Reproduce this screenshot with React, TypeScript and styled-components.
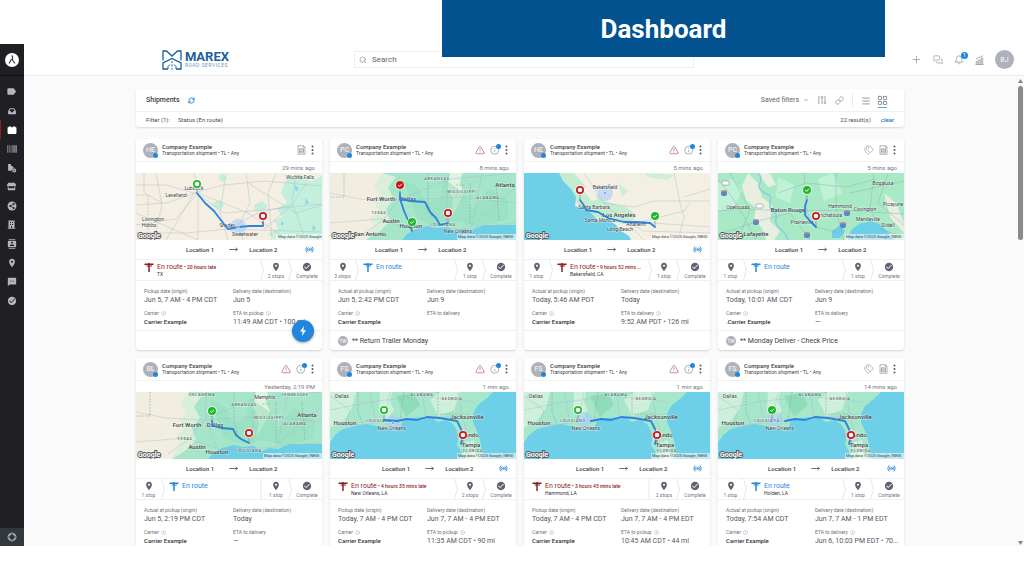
import React from 'react';
import styled, { createGlobalStyle } from 'styled-components';
import { FaBarcode, FaStore } from 'react-icons/fa';
import { MdLabel, MdSms, MdPlace, MdCheckCircle, MdContacts } from 'react-icons/md';
import {
  Plus, MessagesSquare, Bell, Search, RefreshCw, ChevronDown, Menu, LayoutGrid, Link,
  TriangleAlert, Tags, Radio, Info, MoveRight,
} from 'lucide-react';

const GlobalStyle = createGlobalStyle`
  * { box-sizing: border-box; }
  body { margin: 0; background: #fff; overflow: hidden; font-family: Roboto, "Liberation Sans", sans-serif; color: #4a4d55; }
  button { border: 0; padding: 0; margin: 0; background: none; font: inherit; color: inherit; cursor: pointer; }
  svg { display: block; flex: none; }
  a { text-decoration: none; }
`;

/* ---------- shell ---------- */
const Page = styled.div`
  position: relative;
  height: 100vh;
  padding: 44px 0 30px;
`;
const Banner = styled.h1`
  position: absolute;
  top: 0;
  left: 442px;
  right: 139px;
  height: 57px;
  margin: 0;
  display: flex;
  align-items: center;
  justify-content: center;
  background: #01528f;
  color: #fff;
  font-size: 26px;
  line-height: 32px;
  font-weight: 700;
  z-index: 2;
`;
const Shell = styled.div`
  height: 100%;
  display: flex;
`;
const Sidebar = styled.nav`
  width: 24px;
  flex: none;
  display: flex;
  flex-direction: column;
  background: #1f1f24;
  color: #b3b6be;
`;
const Brand = styled.div`
  height: 32px;
  display: flex;
  align-items: center;
  justify-content: center;
  border-bottom: 1px solid #0c0c0f;
  margin-bottom: 6px;
`;
const NavItem = styled.button<{ $active?: boolean }>`
  height: 19px;
  flex: none;
  display: flex;
  align-items: center;
  justify-content: center;
  padding-right: 2px;
  border-left: 1px solid ${p => (p.$active ? '#8f1f1f' : 'transparent')};
  color: ${p => (p.$active ? '#fff' : 'inherit')};
`;
const NavFoot = styled(NavItem)`
  margin-top: auto;
  height: 18px;
  background: #33383c;
`;
const Main = styled.div`
  flex: 1;
  min-width: 0;
  display: flex;
  flex-direction: column;
`;
const Header = styled.header`
  height: 32px;
  flex: none;
  display: grid;
  grid-template-columns: 1fr 340px 1fr;
  align-items: center;
  background: #fff;
  border-bottom: 1px solid #ebebed;
`;
const Logo = styled.div`
  display: flex;
  align-items: center;
  justify-content: flex-end;
  gap: 3px;
  padding-right: 125px;
  color: #1b5f9c;
`;
const LogoText = styled.div`
  display: flex;
  flex-direction: column;
`;
const LogoName = styled.span`
  font-size: 13px;
  line-height: 12px;
  font-weight: 700;
`;
const LogoSub = styled.span`
  font-size: 5px;
  line-height: 5px;
  color: #6f97bd;
  letter-spacing: 0.5px;
`;
const SearchBox = styled.label`
  height: 17px;
  display: flex;
  align-items: center;
  gap: 5px;
  padding: 0 4px;
  border: 1px solid #efeff1;
  color: #85888f;
`;
const SearchInput = styled.input`
  flex: 1;
  min-width: 0;
  border: 0;
  padding: 0;
  outline: 0;
  background: transparent;
  font: 400 8px/12px Roboto, sans-serif;
  color: #62656c;
  &::placeholder { color: #62656c; opacity: 1; }
`;
const HeaderActions = styled.div`
  display: flex;
  align-items: center;
  justify-content: flex-end;
  gap: 11px;
  padding-right: 10px;
  color: #8b8e95;
`;
const IconButton = styled.button`
  position: relative;
  display: flex;
  align-items: center;
  justify-content: center;
`;
const Badge = styled.span`
  position: absolute;
  top: -3px;
  right: -4px;
  width: 7px;
  height: 7px;
  border-radius: 50%;
  background: #1e88e0;
  color: #fff;
  font-size: 5px;
  line-height: 7px;
  text-align: center;
`;
const Avatar = styled.span<{ $size: number }>`
  position: relative;
  flex: none;
  width: ${p => p.$size}px;
  height: ${p => p.$size}px;
  border-radius: 50%;
  background: #adb1b9;
  color: #f1f2f4;
  display: flex;
  align-items: center;
  justify-content: center;
  font-weight: 500;
  font-size: ${p => (p.$size > 10 ? 7 : 5)}px;
  line-height: 8px;
`;
const AvatarDot = styled.i`
  position: absolute;
  right: 0;
  bottom: 0;
  width: 5px;
  height: 5px;
  border-radius: 50%;
  background: #2186dc;
`;
const Body = styled.div`
  flex: 1;
  min-height: 0;
  display: flex;
  background: #fafafa;
`;
const Content = styled.main`
  flex: 1;
  min-width: 0;
  overflow: hidden;
`;
const Column = styled.div`
  width: 100%;
  max-width: 768px;
  margin: 0 auto;
  padding-top: 13px;
`;
const ScrollTrack = styled.div`
  width: 8px;
  flex: none;
  display: flex;
  flex-direction: column;
  align-items: center;
  padding: 3px 0 1px;
  gap: 3px;
  color: #858585;
`;
const ScrollThumb = styled.div`
  width: 5px;
  height: 154px;
  border-radius: 3px;
  background: #8a8a8a;
  margin-bottom: auto;
`;

/* ---------- filter panel ---------- */
const Panel = styled.section`
  background: #fff;
  border-radius: 3px;
  box-shadow: 0 1px 2px rgba(0, 0, 0, 0.14);
  margin-bottom: 12px;
`;
const PanelRow = styled.div<{ $h: number }>`
  height: ${p => p.$h}px;
  display: flex;
  align-items: center;
  padding: 0 10px;
  font-size: 7px;
  line-height: 10px;
  & + & { border-top: 1px solid #f1f1f2; }
`;
const PanelTitle = styled.h2`
  margin: 0 8px 0 0;
  font-size: 7px;
  line-height: 10px;
  font-weight: 500;
  color: #3a3d44;
`;
const Push = styled.span`
  margin-left: auto;
`;
const Tools = styled.div`
  margin-left: auto;
  display: flex;
  align-items: center;
  gap: 8px;
  padding-right: 7px;
  color: #85888f;
`;
const SavedButton = styled.button`
  display: flex;
  align-items: center;
  gap: 4px;
  color: #62656c;
`;
const ToolDivider = styled.i`
  width: 1px;
  height: 16px;
  background: #ececee;
`;
const ViewButton = styled(IconButton)<{ $on?: boolean }>`
  height: 14px;
  width: 9px;
  margin-top: 2px;
  border-bottom: 1px solid ${p => (p.$on ? '#4aa8dc' : 'transparent')};
`;
const FilterText = styled.span`
  margin-right: 8px;
  font-size: 6px;
`;
const ClearLink = styled.a`
  margin-left: 2px;
  font-size: 6px;
  font-weight: 500;
  color: #1479b8;
`;

/* ---------- shipment card ---------- */
const Grid = styled.div`
  display: grid;
  grid-template-columns: repeat(4, 1fr);
  gap: 8px;
`;
const Card = styled.article`
  position: relative;
  min-width: 0;
  background: #fff;
  border-radius: 3px;
  box-shadow: 0 1px 2px rgba(0, 0, 0, 0.16);
  display: flex;
  flex-direction: column;
`;
const CardHead = styled.div`
  height: 23px;
  display: flex;
  align-items: center;
  gap: 4px;
  padding: 0 8px 0 7px;
  border-bottom: 1px solid #f2f2f3;
`;
const HeadText = styled.div`
  flex: 1;
  min-width: 0;
  white-space: nowrap;
`;
const Company = styled.div`
  font-size: 6px;
  line-height: 7px;
  font-weight: 500;
  color: #3a3d44;
`;
const Kind = styled.div`
  font-size: 5px;
  line-height: 7px;
  color: #43464d;
`;
const HeadIcons = styled.div`
  display: flex;
  align-items: center;
  gap: 5px;
  color: #8d9097;
`;
const BlueDot = styled.i`
  position: absolute;
  top: -1px;
  right: -1px;
  width: 5px;
  height: 5px;
  border-radius: 50%;
  background: #2186dc;
`;
const Updated = styled.div`
  height: 11px;
  padding-right: 7px;
  text-align: right;
  font-size: 6px;
  line-height: 11px;
  color: #74777e;
`;
const MapBox = styled.div`
  height: 67px;
  overflow: hidden;
  svg { width: 100%; height: 100%; }
`;
const Places = styled.div<{ $inset: number }>`
  height: 20px;
  display: flex;
  align-items: center;
  padding: 0 8px 0 ${p => p.$inset}px;
  font-size: 6px;
  line-height: 8px;
  font-weight: 500;
  color: #3a3d44;
  border-bottom: 1px solid #f0f0f1;
  svg { margin: 0 11px 0 15px; }
`;
const Live = styled.span`
  margin-left: auto;
  color: #2a8fdf;
  svg { margin: 0; }
`;
const Track = styled.div`
  height: 21px;
  display: flex;
  border-bottom: 1px solid #f0f0f1;
`;
const Stop = styled.div<{ $w: number }>`
  width: ${p => p.$w}px;
  flex: none;
  display: flex;
  flex-direction: column;
  align-items: center;
  padding-top: 2px;
  gap: 1px;
  font-size: 5px;
  line-height: 7px;
  color: #74777e;
  white-space: nowrap;
  svg { color: #5f6372; }
`;
const Status = styled.div<{ $late?: boolean }>`
  flex: 1;
  min-width: 0;
  display: flex;
  gap: 3px;
  padding: 3px 0 0 ${p => (p.$late ? 8 : 4)}px;
`;
const StatusText = styled.div`
  min-width: 0;
`;
const StatusMain = styled.div<{ $color: string }>`
  font-size: 7px;
  line-height: 8px;
  color: ${p => p.$color};
  white-space: nowrap;
  overflow: hidden;
  text-overflow: ellipsis;
`;
const Late = styled.span`
  font-size: 5px;
  font-weight: 500;
`;
const StatusPlace = styled.div`
  font-size: 5px;
  line-height: 7px;
  color: #33363d;
`;
const Details = styled.dl`
  margin: 0;
  height: 50px;
  display: grid;
  grid-template-columns: 89px 1fr;
  align-content: start;
  row-gap: 4px;
  padding: 6px 2px 0 8px;
  border-bottom: 1px solid #f0f0f1;
`;
const Detail = styled.div`
  min-width: 0;
`;
const Term = styled.dt`
  display: flex;
  align-items: center;
  gap: 2px;
  font-size: 5px;
  line-height: 8px;
  color: #6d7077;
`;
const Value = styled.dd<{ $strong?: boolean }>`
  margin: 0;
  font-size: ${p => (p.$strong ? 6 : 7)}px;
  line-height: 10px;
  height: 10px;
  font-weight: ${p => (p.$strong ? 500 : 400)};
  color: ${p => (p.$strong ? '#2f3238' : '#54575e')};
  white-space: nowrap;
  overflow: hidden;
  text-overflow: ellipsis;
`;
const Note = styled.div`
  height: 19px;
  display: flex;
  align-items: center;
  gap: 4px;
  padding: 0 8px;
  font-size: 7px;
  line-height: 10px;
  color: #3d4047;
`;
const Fab = styled.button`
  position: absolute;
  right: 8px;
  bottom: 8px;
  width: 22px;
  height: 22px;
  border-radius: 50%;
  background: #2186dc;
  box-shadow: 0 1px 3px rgba(0, 0, 0, 0.35);
  display: flex;
  align-items: center;
  justify-content: center;
`;

/* ---------- drawings ---------- */
const G = ({ children, s = 9 }: { children: React.ReactNode; s?: number }) => (
  <svg width={s} height={s} viewBox="0 0 18 18" fill="currentColor">{children}</svg>
);
const InboxIcon = () => <G s={10}><path d="M5 4h8l3 5v5a1 1 0 0 1-1 1H3a1 1 0 0 1-1-1V9zM6 6 4.200 9H6.500a2.500 2.500 0 0 0 5 0h2.300L12 6z" fillRule="evenodd" /></G>;
const ShipmentIcon = () => <G s={10}><path d="M3 2.500h4.500v1.500h3V2.500H15v1.500h1a1 1 0 0 1 1 1v9.500a1.500 1.500 0 0 1-1.500 1.500h-13A1.500 1.500 0 0 1 1 14.500V5a1 1 0 0 1 1-1h1z" /></G>;
const TruckGear = () => <G s={10}><path d="M2 2h5v3h2l4 4.500A4 4 0 0 0 8.500 14H2z" /><circle cx="13" cy="13.500" r="3.600" /><circle cx="13" cy="13.500" r="1.200" fill="#1f1f24" /></G>;
const ShareIcon = () => <G s={10}><path d="M9 1a8 8 0 1 0 0 16A8 8 0 0 0 9 1" /><path d="M12 5.500 6 9l6 3.500" stroke="#1f1f24" strokeWidth="1.200" fill="none" /><g fill="#1f1f24"><circle cx="12" cy="5.500" r="1.900" /><circle cx="6" cy="9" r="1.900" /><circle cx="12" cy="12.500" r="1.900" /></g></G>;
const BuildingIcon = () => <G><path d="M3 1h12v15h1.500v1.500h-15V16H3zm3 3v2h2V4zm4 0v2h2V4zM6 8v2h2V8zm4 0v2h2V8zm-2 4v4h2v-4z" fillRule="evenodd" /></G>;
const BuoyIcon = () => <G s={10}><circle cx="9" cy="9" r="6" fill="none" stroke="currentColor" strokeWidth="2.800" /><path d="M9 0v5M9 13v5M0 9h5M13 9h5" stroke="#33383c" strokeWidth="1.600" /><path d="M9 .5v1.500M9 16v1.500M.5 9H2M16 9h1.500" stroke="currentColor" strokeWidth="2" /></G>;
const ChartIcon = () => (
  <svg width="9" height="10" viewBox="0 0 18 20" fill="none" stroke="currentColor" strokeWidth="1.400">
    <path d="M1 19h16M2.500 19v-6h3v6M7.500 19V9.500h3V19M12.500 19V6h3v13M2 8.500 8 4l2 1 6-4" />
  </svg>
);
const SlidersIcon = () => (
  <svg width="10" height="10" viewBox="0 0 20 20" fill="none" stroke="currentColor" strokeWidth="1.500">
    <path d="M3.500 2v4M3.500 10v8M1.500 8h4M10 18V3M7.500 5.500 10 2.500l2.500 3M16 2v15M13.500 14.500 16 17.500l2.500-3" />
  </svg>
);
const DocIcon = () => (
  <svg width="9" height="10" viewBox="0 0 18 20" fill="none" stroke="currentColor" strokeWidth="1.400">
    <path d="M2 1.500h11l3 3v14H2zM13 1.500v3h3M5 7.500h8v8H5zM5 10h8M5 12.700h8" />
  </svg>
);
const InfoCircle = () => (
  <IconButton aria-label="Details">
    <svg width="10" height="10" viewBox="0 0 20 20" fill="none" stroke="currentColor" strokeWidth="1.400"><circle cx="9.500" cy="10.500" r="8" /><path d="M9.500 9.500v5.500M9.500 6v1.500" /></svg>
    <BlueDot />
  </IconButton>
);
const DotsIcon = () => (
  <svg width="3" height="10" viewBox="0 0 3 10" fill="#55586a"><circle cx="1.500" cy="1.500" r="1" /><circle cx="1.500" cy="5" r="1" /><circle cx="1.500" cy="8.500" r="1" /></svg>
);
const SignIcon = ({ color }: { color: string }) => (
  <svg width="10" height="9" viewBox="0 0 20 18" fill={color}><path d="M8.500 0h3v1H19v2.800h-7.500V5H16v2.200h-4.500V18h-3V7.200H6L4.500 6 6 5h2.500V3.800H2L0 2.400 2 1h6.500z" /></svg>
);
const Chevron = ({ line }: { line?: boolean }) => (
  <svg width="4" height="20" viewBox="0 0 4 20" fill="none" stroke="#e6e7e9"><path d={line ? 'M1 0V20' : 'M.5 0 3.500 10 .5 20'} /></svg>
);
const Marex = () => (
  <svg width="20" height="20" viewBox="0 0 40 40" fill="none" stroke="#1b5f9c" strokeWidth="2.600">
    <path d="M2 21V2h7l11 10L31 2h7v19M12 38H2V26l18-9 18 9v12H28" />
    <path d="M12 38v-5l4-4M28 38v-5l-4-4M20 22v4M20 29v4M20 36v3" strokeWidth="2" />
  </svg>
);

/* ---------- maps ---------- */
type Pt = [number, number];
type Label = { t: string; x: number; y: number; k?: 'state' | 'big' };
type MapDef = { base: React.ReactNode; labels: Label[]; routes: string[]; halo?: Pt; pins: { x: number; y: number; c: string; done?: boolean }[] };
const RED = '#cc1418';
const GREEN = '#1fb82a';
const road = { fill: 'none', stroke: '#a9b7c9', strokeWidth: 0.6, opacity: 0.7 } as const;

const lubbockBase = (
  <>
    <rect width="186" height="67" fill="#f4efe2" />
    <path d="M150 6l14-5 10 8 12-6v64h-46l-8-6 10-5-4-9 8-3-5-8 10-7-6-9zM76 30l8-3 4 6-7 4zM118 32l8-4 6 5-5 6-8-1zM86 0l5 5-4 4-5-4z" fill="#c3f0dc" />
    <path d="M158 12l5 3-3 4zM170 25l3 5-4 2zM176 52l4 3-3 3zM145 48l3 3-3 2z" fill="#8fd6e8" />
    <path {...road} d="M0 12h30l28 8 30-8 40-4 58 5M0 32l30-2 30-10 28 20 40-3 58-6M0 52l40-6 22-26M20 0l6 32-8 35M58 0l4 20 0 47M90 0l-6 40 8 27M110 0l4 30-12 24 5 13M140 0l-8 20 4 47M0 60h50l42-4 94 3M30 67l28-47M160 0l-4 30 14 37M62 20l50 20 40 27M8 0v20l18 10M112 10l48 30 26-8M170 10l-14 22-28 24M0 40l62 27M92 56l30-16 34-8" />
    <path d="M0 22h12v45" stroke="#b3b0a8" strokeWidth="0.5" strokeDasharray="2 1" fill="none" />
  </>
);
const southBase = (
  <>
    <rect width="186" height="67" fill="#a5e6cb" />
    <path d="M0 0h52l4 10-6 8 6 6-8 8 4 8-10 8 6 8-12 11H0z" fill="#f1eee1" />
    <path d="M52 0l14 4-8 10 6 12-8 10 4 12-10 10-14 9 8-14-4-8 8-8-4-9 6-7-6-8z" fill="#d9efd9" />
    <path d="M120 0h12l-2 10 4 10-7 14-6 10 2-18-6-10z" fill="#dff3df" />
    <path d="M72 67l5-6 9-5 12-3 8 2 12-1 8 5 8-3 8 1 12-5h32v15z" fill="#6bd0e6" />
    <path d="M74 8l14 6 8 16 14-4 4-20 20 14 8 16 16-20 20 10v20l-30 8-20-6-22 4-18-6z" fill="#92dcbb" opacity=".5" />
    <path {...road} d="M0 20l30 6 40 2 60-4 56 6M70 0v26l-18 22-20 14M70 26l12 32 48-2 56-6M70 26l50-20 66-6M118 0l-2 56M152 0l-10 52M0 50l50-4 30 10M186 14l-46 40" />
    <path d="M0 24h14V0M98 0v30l4 14M134 12h-8M140 10v42M166 10l3 38" stroke="#8d9a95" strokeWidth="0.500" strokeDasharray="2 1" fill="none" />
  </>
);
const laBase = (
  <>
    <rect width="186" height="67" fill="#f4efe3" />
    <path d="M30 0h20l14 16 16 12 22 6 10 8-6 10-22-4-24-8-10-14z" fill="#c4ecd0" />
    <path d="M54 12l12 4 8 10-6 2z" fill="#f4efe3" />
    <path d="M120 0l30 2-6 5-20-3zM94 10l10 8-6 6z" fill="#cdeed8" />
    <path d="M0 0h35l4 8 8 8 5 8-1 9 10 3 6 4 8 8 8-1 8 4 6 7 8 5 2 4H0z" fill="#6dd0e7" />
    <path {...road} d="M60 0l20 30 20 18 86 6M80 30l30 4 20-6h56M100 48l20 10 66 2M150 0l6 30 4 14-6 23M160 24l26-8M112 50l48-12 6-8M120 67l-16-16" />
  </>
);
const shield = (x: number, y: number) => (
  <g key={`${x}-${y}`}><rect x={x - 3} y={y - 2.5} width="6" height="5.500" rx="2" fill="#5f86c4" /><rect x={x - 3} y={y - 2.500} width="6" height="1.500" rx=".7" fill="#b9838b" /></g>
);
const brBase = (
  <>
    <rect width="186" height="67" fill="#a8eac6" />
    <path d="M30 0l10 10 4 14 10 8-2 16 10 10-6 9h-8l-4-12-8-8 2-12-10-8-4-14zM40 0h12l6 12-8 2zM166 20l12 10 8 20v10l-14-16zM0 24l6 6-6 5z" fill="#e8efe0" />
    <path d="M0 10l14-4 10 12-8 16-16 4zM60 4l16 8-4 18-14-6zM100 6l14-6 10 20-18 8z" fill="#bff2d6" />
    <path d="M130 66l3-9 8-6 12-3 10 4 8 8 5 7h-46zM114 58l8-6 5 6-5 7h-8z" fill="#6ccfe9" />
    <path d="M40 0c8 8-4 12 4 18s10 2 8 12 8 6 6 16 8 8 12 21" fill="none" stroke="#8fcbe0" strokeWidth="1.500" />
    <path {...road} stroke="#8fa6bd" d="M0 6l14 18 12 20 12 23M0 38l26-2 44 2 50-1 66 4M118 0v38l8 30M86 0l3 40 9 14 24 6M156 0l-4 36 10 20 24 8M0 62l40-14 32-8M170 0l-10 30 26 22M60 20l28-10 40 4 30-8M20 67l12-30-20-37M72 40l20 27M132 20l54-12" />
    {shield(6, 20)}{shield(38, 49)}{shield(89, 62)}{shield(125, 52)}{shield(129, 40)}
    <rect x="4" y="8" width="7" height="4" rx="1" fill="#fff" stroke="#777" strokeWidth=".5" /><rect x="38" y="31" width="7" height="4" rx="1" fill="#fff" stroke="#777" strokeWidth=".5" />
  </>
);
const flBase = (
  <>
    <rect width="186" height="67" fill="#6dd0e8" />
    <path d="M0 0h163l-6 6-10 8-4 8 0 8 4 9 3 9 2 10 0 9h-18l-3-8-4-6 1-6-1-8-4-7-7-4-8 2-6-4-10-1-9 1-10 3-2 5-4 5-6-2-6 1-8-4-10-2-12 2-12 3-8 6-6 9-3 3z" fill="#a6e6cb" />
    <path d="M0 0h26l-4 16-8 12-14 8zM50 0h12l-2 10 4 8-7 10-8-10zM100 8l10-8h20l-6 18-16 6zM136 50l8-2 4 19h-8z" fill="#cdf0da" />
    <path d="M66 4l18-3 6 12-14 12z" fill="#8fdcb8" />
    <path {...road} d="M0 4l20 14-5 16M0 18l40-8 50-6 54 6M15 34l40-4 30-2 42-4 14-2M60 0l-6 30M92 0l4 26M128 0l4 24 10 34M40 0l6 30" />
    <path d="M28 0v20l5 12M74 0l-4 28M108 0v22h24" stroke="#8d9a95" strokeWidth="0.500" strokeDasharray="2 1" fill="none" />
  </>
);
const flLabels: Label[] = [
  { t: '◦Dallas', x: 11, y: 6 }, { t: 'ALABAMA', x: 92, y: 4, k: 'state' }, { t: 'GEORGIA', x: 122, y: 8, k: 'state' },
  { t: 'Jacksonville', x: 137, y: 27, k: 'big' }, { t: 'Houston', x: 15, y: 33, k: 'big' }, { t: 'LOUISIANA', x: 49, y: 30, k: 'state' },
  { t: 'New Orleans', x: 62, y: 38 }, { t: 'Orlando', x: 138, y: 45, k: 'big' }, { t: 'Tampa', x: 141, y: 55, k: 'big' }, { t: 'FLORIDA', x: 143, y: 60, k: 'state' },
];
const flRoute = 'l10-2 10 1 10-3 13 1 17 3 4 8 2 7-2 8';
const florida = (start: string, halo: Pt, done: boolean): MapDef => ({
  base: flBase, labels: flLabels, routes: [start], halo,
  pins: [{ x: 54, y: 18, c: GREEN, done }, { x: 133, y: 43, c: RED }],
});
const texasLabels = (dx: number, dy: number): Label[] => [
  { t: 'ARKANSAS', x: 107 + dx, y: 7 + dy, k: 'state' }, { t: 'MISSISSIPPI', x: 132 + dx, y: 20 + dy, k: 'state' }, { t: 'ALABAMA', x: 158 + dx, y: 26 + dy, k: 'state' },
  { t: 'Fort Worth◦', x: 52, y: 28 + dy, k: 'big' }, { t: '◦Dallas', x: 77 + dx, y: 28 + dy, k: 'big' }, { t: 'TEXAS', x: 49, y: 41 + dy, k: 'state' },
  { t: 'Austin', x: 61, y: 50 + dy, k: 'big' }, { t: 'Houston', x: 81, y: 55 + dy, k: 'big' }, { t: 'LOUISIANA', x: 113, y: 53 + dy, k: 'state' },
];
const MAPS: Record<string, MapDef> = {
  lubbock: {
    base: lubbockBase, routes: ['M61 20l8 10 9 8 6 8 8 10 10-2 12-1 13 0v-4'], halo: [102, 54],
    pins: [{ x: 61, y: 11, c: GREEN }, { x: 127, y: 43, c: RED }],
    labels: [{ t: 'Lubbock', x: 58, y: 17 }, { t: 'Levelland', x: 40, y: 24 }, { t: 'Lovington', x: 17, y: 48 }, { t: 'Hobbs', x: 13, y: 54 }, { t: 'Snyder', x: 91, y: 54 }, { t: 'Sweetwater', x: 109, y: 63 }, { t: 'Wichita Falls', x: 164, y: 6 }],
  },
  dallas: {
    base: southBase, routes: ['M70 20v6l4 12 4 9 4 11', 'M70 26l10 2 15 1 5 10 6 6 4 7 8-2'],
    pins: [{ x: 70, y: 12, c: RED, done: true }, { x: 82, y: 49, c: GREEN, done: true }, { x: 118, y: 40, c: RED }],
    labels: [...texasLabels(0, 0), { t: 'Atlanta', x: 175, y: 14, k: 'big' }, { t: 'New Orleans', x: 128, y: 60 }, { t: 'San Antonio', x: 40, y: 63, k: 'big' }],
  },
  la: {
    base: laBase, routes: ['M56 27l5 7 1 3 12 2 10 6 16 4 12 0 14 1 5 4'], halo: [81, 20],
    pins: [{ x: 56, y: 17, c: RED }, { x: 131, y: 43, c: GREEN, done: true }],
    labels: [{ t: 'Bakersfield', x: 81, y: 16 }, { t: 'Santa Barbara', x: 70, y: 36 }, { t: 'Los Angeles', x: 95, y: 44, k: 'big' }, { t: 'Santa Monica', x: 76, y: 49 }, { t: 'Anaheim', x: 112, y: 53 }, { t: 'Long Beach', x: 96, y: 58 }],
  },
  baton: {
    base: brBase, routes: ['M89 27l-2 6v9l5 6 6 6'],
    pins: [{ x: 89, y: 17, c: GREEN, done: true }, { x: 98, y: 43, c: RED }],
    labels: [{ t: 'Baton Rouge', x: 70, y: 39, k: 'big' }, { t: 'Prairieville', x: 84, y: 51 }, { t: 'Hammond', x: 122, y: 35 }, { t: 'Covington', x: 147, y: 38 }, { t: 'Mandeville', x: 150, y: 48 }, { t: 'Slidell', x: 170, y: 54 }, { t: 'Picayune', x: 175, y: 33 }, { t: 'Bogalusa', x: 165, y: 12 }, { t: 'Opelousas', x: 20, y: 36 }, { t: 'Lafayette', x: 38, y: 63, k: 'big' }, { t: 'Ponchatoula', x: 110, y: 44 }],
  },
  shreveport: {
    base: southBase, routes: ['M76 29l1 5 8 2 12 1 3 6 5 4 8 4'],
    pins: [{ x: 76, y: 19, c: GREEN, done: true }, { x: 113, y: 41, c: RED }],
    labels: [...texasLabels(1, 7), { t: 'OKLAHOMA', x: 66, y: 4, k: 'state' }, { t: 'TENNESSEE', x: 159, y: 4, k: 'state' }, { t: 'Memphis', x: 129, y: 7 }, { t: 'Atlanta◦', x: 172, y: 25, k: 'big' }],
  },
  florida1: florida('M54 28l13 1' + flRoute, [63, 31], false),
  florida2: florida('M67 29' + flRoute, [60, 28], false),
  florida3: florida('M67 29' + flRoute, [57, 28], true),
};
const MapText = styled.text<{ $k?: string }>`
  font-family: Roboto, sans-serif;
  font-size: ${p => (p.$k === 'big' ? 6 : p.$k === 'state' ? 4 : 5)}px;
  font-weight: ${p => (p.$k ? 500 : 400)};
  letter-spacing: ${p => (p.$k === 'state' ? '0.6px' : 'normal')};
  fill: ${p => (p.$k === 'state' ? '#5a666c' : '#3c4146')};
  stroke: rgba(255, 255, 255, 0.5);
  stroke-width: 1px;
  paint-order: stroke;
  text-anchor: middle;
`;
const GoogleText = styled.text`
  font-family: Roboto, sans-serif;
  font-size: 7px;
  font-weight: 700;
  fill: #fff;
  stroke: #55595c;
  stroke-width: 2px;
  paint-order: stroke;
`;
const Attribution = styled.text`
  font-family: Roboto, sans-serif;
  font-size: 4px;
  fill: #3a3d40;
`;
const RouteMap = ({ id }: { id: string }) => {
  const m = MAPS[id];
  const short = id === 'lubbock';
  return (
    <MapBox>
      <svg viewBox="0 0 186 67" preserveAspectRatio="xMidYMid slice" role="img" aria-label="Route map">
        {m.base}
        {m.halo && <circle cx={m.halo[0]} cy={m.halo[1]} r="8" fill="#a9cdf8" opacity=".6" />}
        {m.labels.map(l => <MapText key={l.t} x={l.x} y={l.y} $k={l.k}>{l.t}</MapText>)}
        {m.routes.map(d => <path key={d} d={d} fill="none" stroke="#2b83dc" strokeWidth="1.800" strokeLinejoin="round" strokeLinecap="round" />)}
        {m.halo && <circle cx={m.halo[0]} cy={m.halo[1]} r="1.300" fill="#2b83dc" stroke="#fff" strokeWidth=".6" />}
        {m.pins.map(p => (
          <g key={`${p.x}-${p.y}`}>
            <path d={`M${p.x} ${p.y}v10`} stroke="#8c8f92" strokeWidth=".8" />
            <circle cx={p.x} cy={p.y} r="4.800" fill="#fff" opacity=".85" />
            <circle cx={p.x} cy={p.y} r="4" fill={p.c} />
            {p.done
              ? <path d={`M${p.x - 1.800} ${p.y}l1.300 1.400 2.400-2.600`} fill="none" stroke="#fff" strokeWidth="1" />
              : <circle cx={p.x} cy={p.y} r="2.300" fill="#fff" />}
          </g>
        ))}
        <GoogleText x="2" y="65">Google</GoogleText>
        <rect x={short ? 140 : 127} y="61" width="59" height="6" fill="#fff" opacity=".55" />
        <Attribution x={short ? 142 : 128} y="65">{short ? 'Map data ©2025 Google' : 'Map data ©2025 Google, INEGI'}</Attribution>
      </svg>
    </MapBox>
  );
};

/* ---------- data ---------- */
type Shipment = {
  who: string; tagged?: boolean; docOnly?: boolean; ago: string; map: string; inset: number; live?: boolean;
  before?: string; late?: string; place?: string; after: string; line?: boolean;
  l1: string; v1: string; v2: string; l3: string; info3?: boolean; v3: string; note?: string; carrier?: string; fab?: boolean;
};
const AP = 'Actual at pickup (origin)';
const PD = 'Pickup date (origin)';
const DATA: Shipment[] = [
  { who: 'HE', docOnly: true, ago: '29 mins ago', map: 'lubbock', inset: 50, live: true, late: '20 hours late', place: 'TX', after: '2 stops', l1: PD, v1: 'Jun 5, 7 AM - 4 PM CDT', v2: 'Jun 5', l3: 'ETA to pickup', info3: true, v3: '11:49 AM CDT • 100 mi', fab: true },
  { who: 'PC', ago: '8 mins ago', map: 'dallas', inset: 45, before: '3 stops', after: '1 stop', l1: AP, v1: 'Jun 5, 2:42 PM CDT', v2: 'Jun 9', l3: 'ETA to delivery', v3: '', note: '** Return Trailer Monday' },
  { who: 'HE', ago: '5 mins ago', map: 'la', inset: 40, live: true, before: '1 stop', late: '9 hours 52 mins ...', place: 'Bakersfield, CA', after: '1 stop', l1: AP, v1: 'Today, 5:46 AM PDT', v2: 'Today', l3: 'ETA to delivery', info3: true, v3: '9:52 AM PDT • 126 mi' },
  { who: 'PC', tagged: true, ago: '5 mins ago', map: 'baton', inset: 57, before: '1 stop', after: '1 stop', l1: AP, v1: 'Today, 10:01 AM CDT', v2: 'Jun 9', l3: 'ETA to delivery', v3: '—', note: '** Monday Deliver - Check Price', carrier: '.Carrier Example' },
  { who: 'BL', ago: 'Yesterday, 2:19 PM', map: 'shreveport', inset: 50, before: '1 stop', after: '1 stop', line: true, l1: AP, v1: 'Jun 5, 2:19 PM CDT', v2: 'Today', l3: 'ETA to delivery', v3: '—' },
  { who: 'FS', ago: '1 min ago', map: 'florida1', inset: 52, live: true, late: '4 hours 35 mins late', place: 'New Orleans, LA', after: '2 stops', l1: PD, v1: 'Today, 7 AM - 4 PM CDT', v2: 'Jun 7, 7 AM - 4 PM EDT', l3: 'ETA to pickup', info3: true, v3: '11:35 AM CDT • 90 mi' },
  { who: 'FS', ago: '1 min ago', map: 'florida2', inset: 52, live: true, late: '3 hours 45 mins late', place: 'Hammond, LA', after: '2 stops', line: true, l1: PD, v1: 'Today, 7 AM - 4 PM CDT', v2: 'Jun 7, 7 AM - 4 PM EDT', l3: 'ETA to pickup', info3: true, v3: '10:45 AM CDT • 44 mi' },
  { who: 'FS', tagged: true, ago: '14 mins ago', map: 'florida3', inset: 50, live: true, before: '1 stop', place: 'Holden, LA', after: '1 stop', l1: AP, v1: 'Today, 7:54 AM CDT', v2: 'Jun 7, 7 AM - 1 PM EDT', l3: 'ETA to delivery', info3: true, v3: 'Jun 6, 10:03 PM EDT • 70...' },
];

const ShipmentCard = ({ s }: { s: Shipment }) => {
  const color = s.late ? '#8e1f1f' : '#2a86d8';
  return (
    <Card>
      <CardHead>
        <Avatar $size={15}>{s.who}<AvatarDot /></Avatar>
        <HeadText>
          <Company>Company Example</Company>
          <Kind>Transportation shipment • TL • Any</Kind>
        </HeadText>
        <HeadIcons>
          {s.tagged && <Tags size={10} strokeWidth={1.500} />}
          {(s.tagged || s.docOnly) && <DocIcon />}
          {!s.tagged && !s.docOnly && <><TriangleAlert size={10} strokeWidth={1.800} color="#b86a6a" /><InfoCircle /></>}
          <IconButton aria-label="More"><DotsIcon /></IconButton>
        </HeadIcons>
      </CardHead>
      <Updated>{s.ago}</Updated>
      <RouteMap id={s.map} />
      <Places $inset={s.inset}>
        Location 1 <MoveRight size={9} strokeWidth={2} /> Location 2
        {s.live && <Live><Radio size={9} strokeWidth={2.500} /></Live>}
      </Places>
      <Track>
        {s.before && <><Stop $w={25}><MdPlace size={10} />{s.before}</Stop><Chevron /></>}
        <Status $late={!s.before}>
          <SignIcon color={color} />
          <StatusText>
            <StatusMain $color={color}>En route{s.late && <Late> • {s.late}</Late>}</StatusMain>
            {s.place && <StatusPlace>{s.place}</StatusPlace>}
          </StatusText>
        </Status>
        <Chevron line={s.line} />
        <Stop $w={24}><MdPlace size={10} />{s.after}</Stop>
        <Chevron />
        <Stop $w={30}><MdCheckCircle size={10} />Complete</Stop>
      </Track>
      <Details>
        <Detail><Term>{s.l1}</Term><Value>{s.v1}</Value></Detail>
        <Detail><Term>Delivery date (destination)</Term><Value>{s.v2}</Value></Detail>
        <Detail><Term>Carrier <Info size={5} color="#a3a6ac" /></Term><Value $strong>{s.carrier || 'Carrier Example'}</Value></Detail>
        <Detail><Term>{s.l3} {s.info3 && <Info size={5} color="#a3a6ac" />}</Term><Value>{s.v3}</Value></Detail>
      </Details>
      <Note>{s.note && <><Avatar $size={10}>TW</Avatar>{s.note}</>}</Note>
      {s.fab && <Fab aria-label="Quick actions"><svg width="10" height="10" viewBox="0 0 10 10"><path d="M6 0 2 5.600h2.500L4 10l4-5.800H5.400z" fill="#fff" /></svg></Fab>}
    </Card>
  );
};

const NAV: [string, React.ReactNode][] = [
  ['Quotes', <MdLabel size={11} />], ['Inbox', <InboxIcon />], ['Shipments', <ShipmentIcon />], ['Items', <FaBarcode size={10} />],
  ['Carriers', <TruckGear />], ['Vendors', <FaStore size={9} />], ['Network', <ShareIcon />], ['Companies', <BuildingIcon />],
  ['Contacts', <MdContacts size={10} />], ['Locations', <MdPlace size={10} />], ['Messages', <MdSms size={10} />], ['Tasks', <MdCheckCircle size={10} />],
];

export default function App() {
  return (
    <>
      <GlobalStyle />
      <Page>
        <Banner>Dashboard</Banner>
        <Shell>
          <Sidebar>
            <Brand><svg width="14" height="14" viewBox="0 0 28 28"><circle cx="14" cy="14" r="14" fill="#fff" /><path d="M13 6h2v8l5 7M13 12l-5 9M15 12v2" fill="none" stroke="#333" strokeWidth="2.200" /></svg></Brand>
            {NAV.map(([name, icon]) => <NavItem key={name} aria-label={name} $active={name === 'Shipments'}>{icon}</NavItem>)}
            <NavFoot aria-label="Help"><BuoyIcon /></NavFoot>
          </Sidebar>
          <Main>
            <Header>
              <Logo><Marex /><LogoText><LogoName>MAREX</LogoName><LogoSub>ROAD SERVICES</LogoSub></LogoText></Logo>
              <SearchBox><Search size={8} strokeWidth={2} /><SearchInput type="search" placeholder="Search" aria-label="Search" /></SearchBox>
              <HeaderActions>
                <IconButton aria-label="Add"><Plus size={11} strokeWidth={1.500} /></IconButton>
                <IconButton aria-label="Messages"><MessagesSquare size={10} strokeWidth={1.500} /></IconButton>
                <IconButton aria-label="Notifications"><Bell size={10} strokeWidth={1.800} /><Badge>1</Badge></IconButton>
                <IconButton aria-label="Reports"><ChartIcon /></IconButton>
                <Avatar $size={19}>BJ</Avatar>
              </HeaderActions>
            </Header>
            <Body>
              <Content>
                <Column>
                  <Panel>
                    <PanelRow $h={22}>
                      <PanelTitle>Shipments</PanelTitle>
                      <IconButton aria-label="Refresh"><RefreshCw size={7} strokeWidth={3} color="#2387c9" /></IconButton>
                      <Tools>
                        <SavedButton>Saved filters <ChevronDown size={6} /></SavedButton>
                        <IconButton aria-label="Sort"><SlidersIcon /></IconButton>
                        <IconButton aria-label="Copy link"><Link size={9} strokeWidth={1.800} /></IconButton>
                        <ToolDivider />
                        <ViewButton aria-label="List"><Menu size={10} strokeWidth={2} /></ViewButton>
                        <ViewButton aria-label="Grid" $on><LayoutGrid size={11} strokeWidth={2} /></ViewButton>
                      </Tools>
                    </PanelRow>
                    <PanelRow $h={16}>
                      <FilterText>Filter (1):</FilterText><FilterText>Status (En route)</FilterText>
                      <Push /><FilterText>22 result(s)</FilterText><ClearLink href="#clear">clear</ClearLink>
                    </PanelRow>
                  </Panel>
                  <Grid>{DATA.map((s, i) => <ShipmentCard key={i} s={s} />)}</Grid>
                </Column>
              </Content>
              <ScrollTrack>
                <svg width="5" height="4" viewBox="0 0 5 4" fill="currentColor"><path d="M2.500 0 5 4H0z" /></svg>
                <ScrollThumb />
                <svg width="5" height="4" viewBox="0 0 5 4" fill="currentColor"><path d="M0 0h5L2.500 4z" /></svg>
              </ScrollTrack>
            </Body>
          </Main>
        </Shell>
      </Page>
    </>
  );
}
